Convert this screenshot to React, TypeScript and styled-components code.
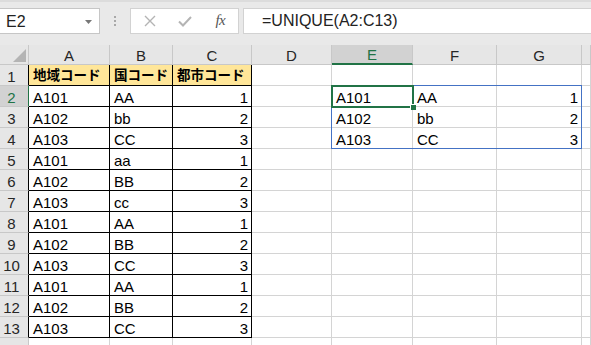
import React from "react";
import styled, { createGlobalStyle } from "styled-components";

const GREEN = "#217346";
const GRID = "#d4d4d4";
const HEAD_LINE = "#c8c8c8";
const HEAD_BG = "#e6e6e6";
const LATIN = `"Liberation Sans", "Noto Sans CJK JP", Arial, sans-serif`;

const Global = createGlobalStyle`
  html, body { margin: 0; padding: 0; background: #fff; }
  body { font-family: ${LATIN}; color: #000; overflow: hidden; }
  * { box-sizing: border-box; }
`;

const Page = styled.div`
  width: 591px;
  height: 345px;
  overflow: hidden;
  display: flex;
  flex-direction: column;
  background: #fff;
`;

/* ---------- formula bar ---------- */
const FormulaBar = styled.div`
  height: 45px;
  flex: none;
  display: flex;
  align-items: flex-start;
  padding-top: 6px;
  background: #e9e9e9;
  border-top: 2px solid #dcdcdc;
`;

const NameBox = styled.div`
  width: 101px;
  height: 26px;
  margin-left: -1px;
  background: #fff;
  border: 1px solid #c6c6c6;
  display: flex;
  align-items: center;
  justify-content: space-between;
  padding: 1px 7px 0 6px;
  font-size: 16px;
  color: #222;
`;

const Dots = styled.div`
  width: 30px;
  height: 26px;
  display: flex;
  flex-direction: column;
  align-items: center;
  justify-content: center;
  gap: 2px;
  padding-left: 0px;
`;

const Dot = styled.span`
  width: 2px;
  height: 2px;
  background: #a8a8a8;
`;

const ButtonBox = styled.div`
  width: 109px;
  height: 26px;
  background: #fff;
  border: 1px solid #d2d2d2;
  display: flex;
  align-items: center;
  padding-left: 1px;
`;

const IconSlot = styled.div`
  width: 36px;
  height: 24px;
  display: flex;
  align-items: center;
  justify-content: center;
`;

const Fx = styled.span`
  font-family: "Liberation Serif", "DejaVu Serif", serif;
  font-style: italic;
  font-size: 15px;
  color: #555;
  letter-spacing: -0.5px;
  padding-bottom: 1px;
`;

const FormulaInput = styled.div`
  flex: 1;
  height: 26px;
  margin-left: 4px;
  margin-right: -2px;
  background: #fff;
  border: 1px solid #d2d2d2;
  display: flex;
  align-items: center;
  padding-left: 18px;
  font-size: 16px;
  color: #222;
  white-space: nowrap;
`;

/* ---------- sheet ---------- */
const COLS = [29, 81, 63, 79, 80, 81, 84, 85];

const Sheet = styled.div`
  flex: 1;
  display: grid;
  grid-template-columns: ${COLS.map((c) => `${c}px`).join(" ")} 1fr;
  grid-template-rows: 20px repeat(14, 21px);
  overflow: hidden;
  font-size: 15px;
  line-height: 17px;
`;

type Pos = { $r: number; $c: number };

const Corner = styled.div<Pos>`
  grid-row: ${(p) => p.$r};
  grid-column: ${(p) => p.$c};
  background: ${HEAD_BG};
  border-right: 1px solid ${HEAD_LINE};
  border-bottom: 1px solid ${HEAD_LINE};
  display: flex;
  justify-content: flex-end;
  align-items: flex-end;
  padding: 0 2px 2px 0;
`;

const ColHeader = styled.div<Pos & { $active?: boolean }>`
  grid-row: ${(p) => p.$r};
  grid-column: ${(p) => p.$c};
  background: ${(p) => (p.$active ? "#d2d2d2" : HEAD_BG)};
  border-right: 1px solid ${HEAD_LINE};
  border-bottom: ${(p) => (p.$active ? `2px solid ${GREEN}` : `1px solid ${HEAD_LINE}`)};
  color: ${(p) => (p.$active ? GREEN : "#262626")};
  display: flex;
  justify-content: center;
  align-items: flex-end;
  padding-bottom: ${(p) => (p.$active ? 0 : 0)}px;
  overflow: hidden;
`;

const RowHeader = styled.div<Pos & { $active?: boolean; $boxed?: boolean }>`
  grid-row: ${(p) => p.$r};
  grid-column: ${(p) => p.$c};
  background: ${(p) => (p.$active ? "#d2d2d2" : HEAD_BG)};
  border-right: 1px solid
    ${(p) => (p.$active ? GREEN : p.$boxed ? "#000" : HEAD_LINE)};
  border-bottom: 1px solid ${HEAD_LINE};
  color: ${(p) => (p.$active ? GREEN : "#262626")};
  display: flex;
  justify-content: center;
  align-items: flex-end;
  padding-right: 5px;
  overflow: hidden;
`;

const Cell = styled.div<
  Pos & { $boxed?: boolean; $title?: boolean; $right?: boolean }
>`
  grid-row: ${(p) => p.$r};
  grid-column: ${(p) => p.$c};
  background: ${(p) => (p.$title ? "#ffe699" : "#fff")};
  border-right: 1px solid ${(p) => (p.$boxed ? "#000" : GRID)};
  border-bottom: 1px solid ${(p) => (p.$boxed ? "#000" : GRID)};
  display: flex;
  align-items: ${(p) => (p.$title ? "center" : "flex-end")};
  justify-content: ${(p) => (p.$right ? "flex-end" : "flex-start")};
  padding: 0 3px 0 4px;
  white-space: nowrap;
  overflow: hidden;
  font-family: ${(p) =>
    p.$title ? `"Noto Sans CJK JP", sans-serif` : LATIN};
  font-weight: ${(p) => (p.$title ? 700 : 400)};
  font-size: ${(p) => (p.$title ? "13.5px" : "15px")};
  line-height: ${(p) => (p.$title ? "1" : "17px")};
`;

const SpillBox = styled.div`
  grid-row: 3 / 6;
  grid-column: 6 / 9;
  margin: -1px 0 0 -1px;
  border: 1px solid #4472c4;
  pointer-events: none;
`;

const Selection = styled.div`
  grid-row: 3;
  grid-column: 6;
  margin: -1px;
  border: 2px solid ${GREEN};
  position: relative;
  pointer-events: none;
`;

const FillHandle = styled.span`
  position: absolute;
  right: -4px;
  bottom: -4px;
  width: 6px;
  height: 6px;
  background: ${GREEN};
  border: 1px solid #fff;
  border-width: 1px 0 0 1px;
`;

const LETTERS = ["A", "B", "C", "D", "E", "F", "G", "H"];

const TABLE: string[][] = [
  ["地域コード", "国コード", "都市コード"],
  ["A101", "AA", "1"],
  ["A102", "bb", "2"],
  ["A103", "CC", "3"],
  ["A101", "aa", "1"],
  ["A102", "BB", "2"],
  ["A103", "cc", "3"],
  ["A101", "AA", "1"],
  ["A102", "BB", "2"],
  ["A103", "CC", "3"],
  ["A101", "AA", "1"],
  ["A102", "BB", "2"],
  ["A103", "CC", "3"],
];

const SPILL: string[][] = [
  ["A101", "AA", "1"],
  ["A102", "bb", "2"],
  ["A103", "CC", "3"],
];

function cellContent(row: number, col: number): {
  text: string;
  boxed: boolean;
  title: boolean;
  right: boolean;
} {
  // col: 1 = A ... 8 = H
  if (row <= 13 && col <= 3) {
    const text = TABLE[row - 1][col - 1];
    return { text, boxed: true, title: row === 1, right: row > 1 && col === 3 };
  }
  if (row >= 2 && row <= 4 && col >= 5 && col <= 7) {
    return {
      text: SPILL[row - 2][col - 5],
      boxed: false,
      title: false,
      right: col === 7,
    };
  }
  return { text: "", boxed: false, title: false, right: false };
}

export default function App() {
  const rows = Array.from({ length: 14 }, (_, i) => i + 1);
  return (
    <Page>
      <Global />
      <FormulaBar>
        <NameBox>
          <span>E2</span>
          <svg width="7" height="4" viewBox="0 0 7 4">
            <polygon points="0,0 7,0 3.5,4" fill="#777" />
          </svg>
        </NameBox>
        <Dots>
          <Dot />
          <Dot />
          <Dot />
        </Dots>
        <ButtonBox>
          <IconSlot>
            <svg width="12" height="12" viewBox="0 0 12 12">
              <path
                d="M1 1 L11 11 M11 1 L1 11"
                stroke="#b4b4b4"
                strokeWidth="1.4"
                fill="none"
              />
            </svg>
          </IconSlot>
          <IconSlot>
            <svg width="14" height="11" viewBox="0 0 14 11">
              <path
                d="M1 5.5 L5 9.5 L13 1"
                stroke="#b4b4b4"
                strokeWidth="2"
                fill="none"
              />
            </svg>
          </IconSlot>
          <IconSlot>
            <Fx>fx</Fx>
          </IconSlot>
        </ButtonBox>
        <FormulaInput>=UNIQUE(A2:C13)</FormulaInput>
      </FormulaBar>

      <Sheet>
        <Corner $r={1} $c={1}>
          <svg width="13" height="13" viewBox="0 0 13 13">
            <polygon points="13,0 13,13 0,13" fill="#b4b4b4" />
          </svg>
        </Corner>
        {LETTERS.map((l, i) => (
          <ColHeader key={l} $r={1} $c={i + 2} $active={l === "E"}>
            {l === "H" ? "" : l}
          </ColHeader>
        ))}
        {rows.map((r) => (
          <React.Fragment key={r}>
            <RowHeader $r={r + 1} $c={1} $active={r === 2} $boxed={r <= 13}>
              {r}
            </RowHeader>
            {LETTERS.map((_, ci) => {
              const c = ci + 1;
              const info = cellContent(r, c);
              return (
                <Cell
                  key={c}
                  $r={r + 1}
                  $c={c + 1}
                  $boxed={info.boxed}
                  $title={info.title}
                  $right={info.right}
                >
                  {info.text}
                </Cell>
              );
            })}
          </React.Fragment>
        ))}
        <SpillBox />
        <Selection>
          <FillHandle />
        </Selection>
      </Sheet>
    </Page>
  );
}
